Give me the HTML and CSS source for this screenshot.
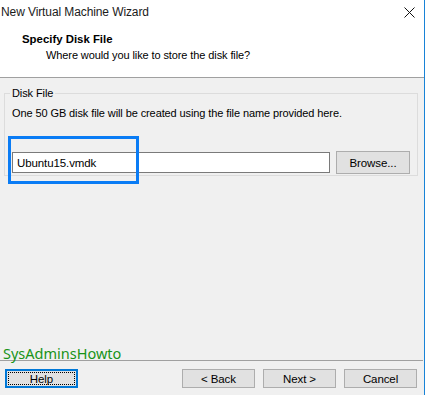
FILE: index.html
```html
<!DOCTYPE html>
<html lang="en">
<head>
<meta charset="utf-8">
<title>New Virtual Machine Wizard</title>
<link rel="stylesheet" href="styles.css">
</head>
<body>
<div class="window">
  <div class="header">
    <div class="titlebar">
      <span class="title">New Virtual Machine Wizard</span>
      <svg class="close" width="11" height="11" viewBox="0 0 11 11"><path d="M0.5 0.5 L10.5 10.5 M10.5 0.5 L0.5 10.5" stroke="#111" stroke-width="1" fill="none"/></svg>
    </div>
    <div class="head-title">Specify Disk File</div>
    <div class="head-sub">Where would you like to store the disk file?</div>
  </div>
  <div class="content">
    <fieldset class="group">
      <legend class="legend">Disk File</legend>
      <div class="desc">One 50 GB disk file will be created using the file name provided here.</div>
      <div class="file-row">
        <input class="file-input" type="text" value="Ubuntu15.vmdk">
        <button class="btn browse">Browse...</button>
      </div>
      <div class="highlight"></div>
    </fieldset>
  </div>
  <div class="spacer"></div>
  <div class="footer">
    <div class="brand">SysAdminsHowto</div>
    <div class="buttons">
      <button class="btn help"><span class="focus">Help</span></button>
      <div class="nav">
        <button class="btn">&lt; Back</button>
        <button class="btn">Next &gt;</button>
        <button class="btn">Cancel</button>
      </div>
    </div>
  </div>
</div>
</body>
</html>
```
FILE: styles.css
```css
html, body {
  margin: 0;
  padding: 0;
}
body {
  width: 425px;
  height: 395px;
  background: #f0f0f0;
  font-family: "Liberation Sans", Arial, sans-serif;
  font-size: 11px;
  letter-spacing: -0.1px;
  color: #000;
  overflow: hidden;
}
.window {
  position: relative;
  width: 425px;
  height: 395px;
  box-sizing: border-box;
  border-right: 1px solid #1883d7;
  display: flex;
  flex-direction: column;
}
.header {
  background: #fff;
  height: 77px;
  border-bottom: 1px solid #a0a0a0;
}
.titlebar {
  height: 24px;
  display: flex;
  align-items: center;
  justify-content: space-between;
  padding: 0 9px 0 1px;
}
.title {
  font-size: 12px;
  line-height: 24px;
  color: #1b1b1b;
}
.close {
  display: block;
  margin-top: 1px;
}
.head-title {
  font-weight: bold;
  font-size: 11.4px;
  letter-spacing: 0;
  line-height: 16px;
  margin-top: 7px;
  padding-left: 22px;
}
.head-sub {
  line-height: 16px;
  padding-left: 46px;
}
.content {
  padding: 0 0 0 4px;
}
.group {
  position: relative;
  width: 413px;
  box-sizing: border-box;
  margin: 7px 0 0 0;
  padding: 0 7px 1px 7px;
  border: 1px solid #dcdcdc;
}
.legend {
  padding: 0 2px;
  margin-left: -2px;
  line-height: 17px;
}
.desc {
  margin-top: 3px;
  line-height: 16px;
}
.file-row {
  display: flex;
  align-items: center;
  margin-top: 30px;
}
.file-input {
  width: 318px;
  height: 21px;
  box-sizing: border-box;
  border: 1px solid #7a7a7a;
  background: #fff;
  margin: 0;
  padding: 0 4px;
  font-family: inherit;
  font-size: 11.5px;
  letter-spacing: -0.1px;
  color: #000;
  outline: none;
}
.btn {
  box-sizing: border-box;
  width: 73px;
  height: 19px;
  margin: 0;
  padding: 0;
  border: 1px solid #adadad;
  background: #e1e1e1;
  font-family: inherit;
  font-size: 11.5px;
  letter-spacing: -0.1px;
  color: #000;
}
.browse {
  width: 74px;
  height: 23px;
  margin-left: 6px;
}
.highlight {
  position: absolute;
  left: 3px;
  top: 34px;
  width: 131px;
  height: 48px;
  box-sizing: border-box;
  border: 3px solid #0a7cf5;
  pointer-events: none;
}
.spacer {
  flex: 1;
}
.footer {
  padding-bottom: 7px;
}
.brand {
  font-family: "Noto Sans", sans-serif;
  font-size: 14.5px;
  letter-spacing: 0;
  line-height: 13px;
  padding-top: 4px;
  color: #179317;
  padding-left: 3px;
  border-bottom: 1px solid #a0a0a0;
  margin-right: 1px;
}
.buttons {
  display: flex;
  justify-content: space-between;
  margin-top: 8px;
  padding: 0 7px 0 5px;
}
.nav {
  display: flex;
  gap: 8px;
}
.help {
  border: 2px solid #0078d7;
  padding: 1px;
}
.focus {
  display: flex;
  align-items: center;
  justify-content: center;
  height: 100%;
  box-sizing: border-box;
  border: 1px dotted #000;
}
```
